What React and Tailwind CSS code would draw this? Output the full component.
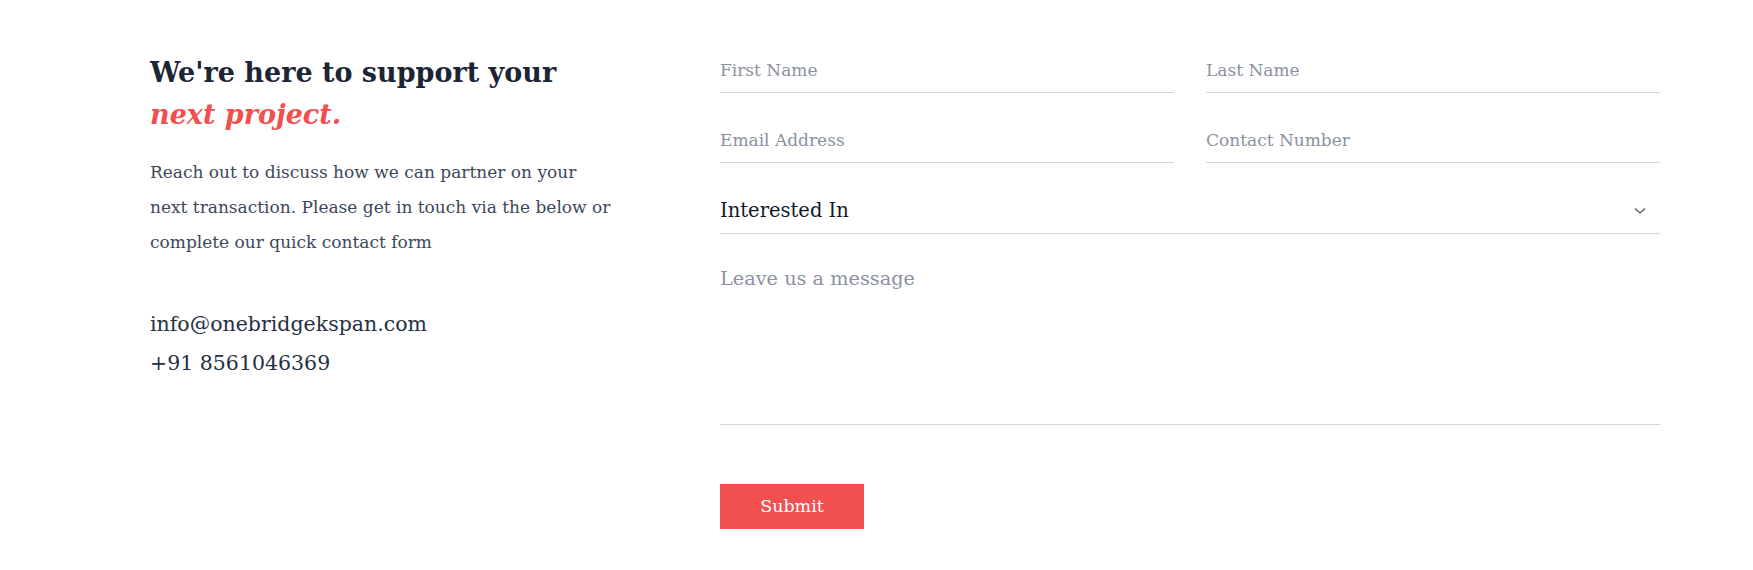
export default function App() {
  const serif = { fontFamily: '"DejaVu Serif", "Liberation Serif", serif' };
  return (
    <div className="w-full h-[570px] bg-white flex pl-[150px]" style={serif}>
      <div className="w-[480px] pt-[52px]">
        <h2 className="text-[27px] leading-[42px] font-bold text-[#1b2536]">
          We're here to support your
          <br />
          <span className="italic text-[#f24f4f]">next project.</span>
        </h2>
        <p className="mt-[19px] w-[465px] text-[17px] leading-[35px] text-[#3d4859]">
          Reach out to discuss how we can partner on your next transaction. Please get in touch via the below or complete our quick contact form
        </p>
        <div className="mt-[45px] text-[20.5px] leading-[39px] text-[#263043]">
          <div>info@onebridgekspan.com</div>
          <div>+91 8561046369</div>
        </div>
      </div>
      <form className="ml-[90px] w-[940px] pt-[47px]">
        <div className="grid grid-cols-2 gap-x-8 gap-y-6">
          <input placeholder="First Name" className="h-[46px] border-b border-[#d4d6dc] outline-none text-[17px] text-[#1f2a3c] placeholder:text-[#8a92a1]" />
          <input placeholder="Last Name" className="h-[46px] border-b border-[#d4d6dc] outline-none text-[17px] text-[#1f2a3c] placeholder:text-[#8a92a1]" />
          <input placeholder="Email Address" className="h-[46px] border-b border-[#d4d6dc] outline-none text-[17px] text-[#1f2a3c] placeholder:text-[#8a92a1]" />
          <input placeholder="Contact Number" className="h-[46px] border-b border-[#d4d6dc] outline-none text-[17px] text-[#1f2a3c] placeholder:text-[#8a92a1]" />
        </div>
        <div className="mt-[25px] h-[46px] border-b border-[#d4d6dc] flex items-center justify-between pr-[14px]">
          <span className="text-[19.5px] text-[#111a2b]">Interested In</span>
          <svg width="12" height="8" viewBox="0 0 12 8" fill="none" stroke="#4b5563" strokeWidth="1.3">
            <path d="M1 1.5 L6 6 L11 1.5" />
          </svg>
        </div>
        <textarea
          placeholder="Leave us a message"
          className="mt-[24px] block w-full h-[167px] pt-[7px] resize-none border-b border-[#d4d6dc] outline-none text-[19.3px] text-[#1f2a3c] placeholder:text-[#8a92a1]"
        />
        <button type="button" className="mt-[59px] w-[144px] h-[45px] bg-[#f25050] text-white text-[17.5px]">
          Submit
        </button>
      </form>
    </div>
  );
}
